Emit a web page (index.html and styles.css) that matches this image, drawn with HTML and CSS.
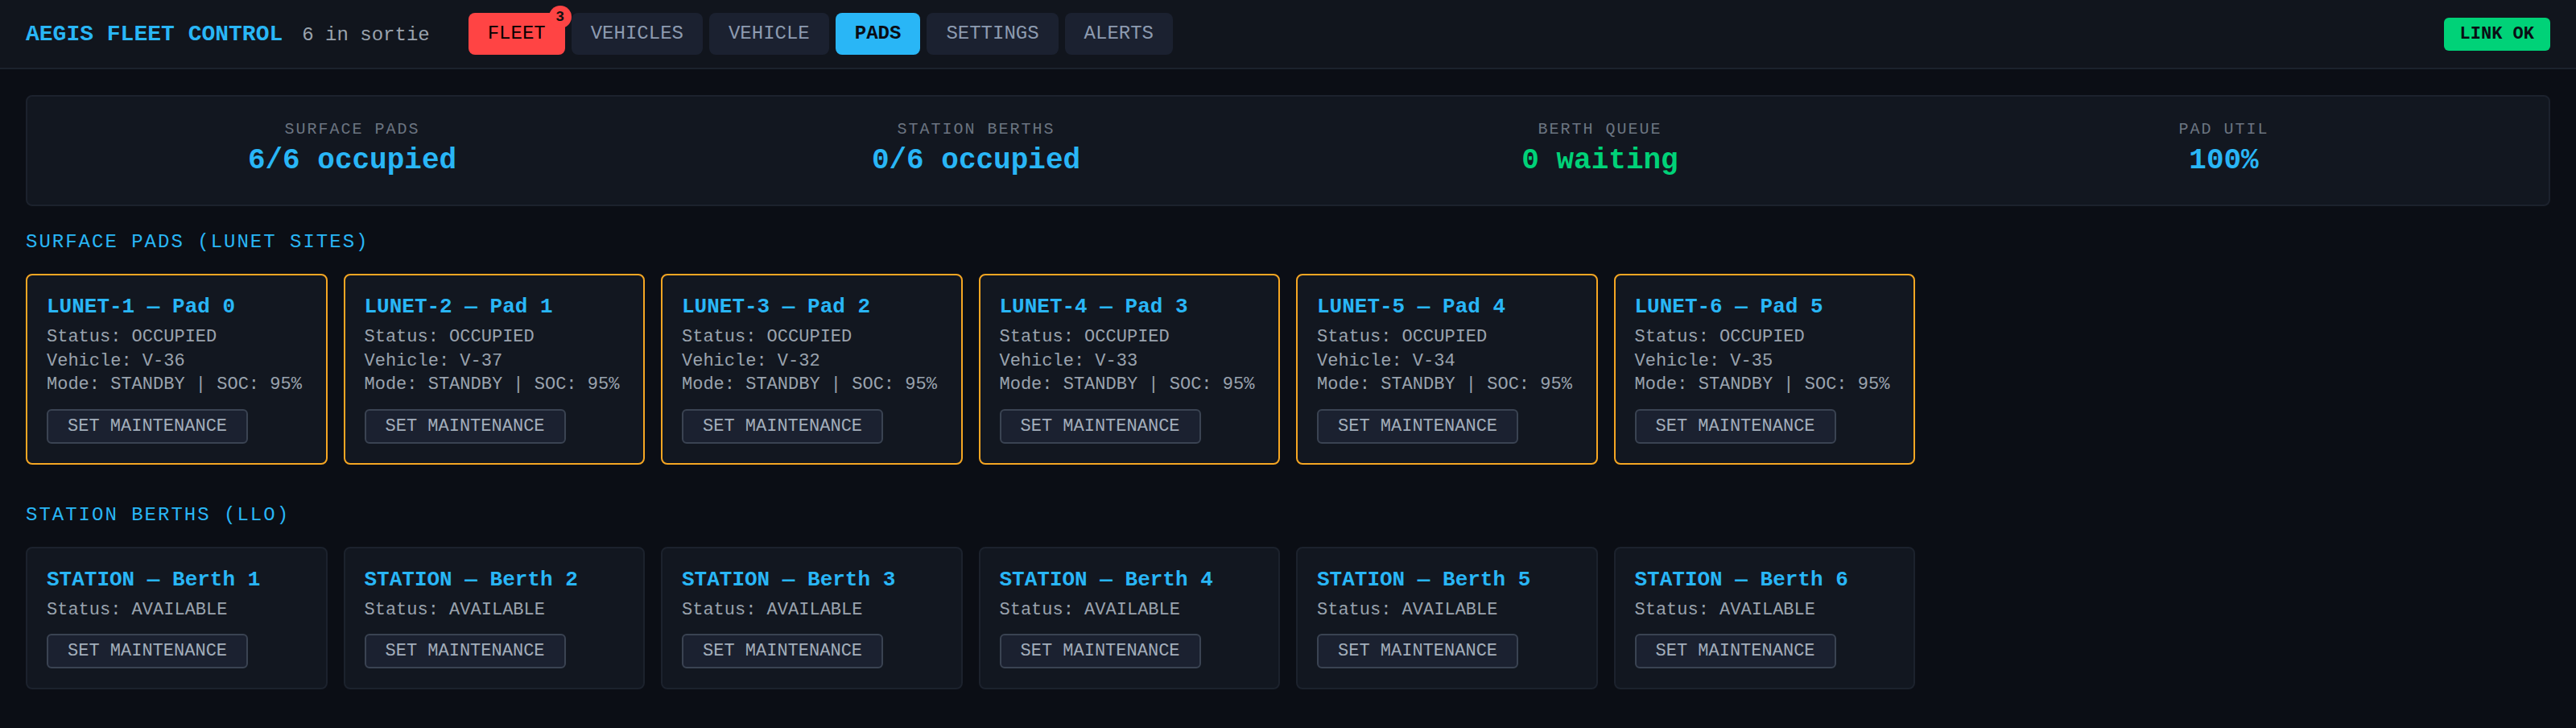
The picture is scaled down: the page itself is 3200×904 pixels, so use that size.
FILE: index.html
```html
<!DOCTYPE html>
<html lang="en">
<head>
  <meta charset="UTF-8" />
  <meta name="viewport" content="width=device-width, initial-scale=1" />
  <title>Aegis Fleet Control - Pads</title>
  <link rel="stylesheet" href="styles.css">
</head>
<body>
  <header class="topbar">
    <div class="brand">
      <h1>AEGIS FLEET CONTROL</h1>
      <span class="sortie">6 in sortie</span>
    </div>
    <nav class="tabs">
      <button class="tab tab-alert"><span class="tab-text">FLEET</span><span class="badge">3</span></button>
      <button class="tab">VEHICLES</button>
      <button class="tab">VEHICLE</button>
      <button class="tab active">PADS</button>
      <button class="tab">SETTINGS</button>
      <button class="tab">ALERTS</button>
    </nav>
    <span class="link-ok">LINK OK</span>
  </header>

  <main class="content">
    <div class="stats">
      <div class="stat">
        <div class="stat-label">SURFACE PADS</div>
        <div class="stat-value">6/6 occupied</div>
      </div>
      <div class="stat">
        <div class="stat-label">STATION BERTHS</div>
        <div class="stat-value">0/6 occupied</div>
      </div>
      <div class="stat">
        <div class="stat-label">BERTH QUEUE</div>
        <div class="stat-value ok">0 waiting</div>
      </div>
      <div class="stat">
        <div class="stat-label">PAD UTIL</div>
        <div class="stat-value">100%</div>
      </div>
    </div>

    <!-- surface pads -->
    <section class="section">
      <h2 class="section-title">SURFACE PADS (LUNET SITES)</h2>
      <div class="grid">
        <div class="card occupied">
          <h3>LUNET-1 — Pad 0</h3>
          <p>Status: OCCUPIED</p>
          <p>Vehicle: V-36</p>
          <p>Mode: STANDBY | SOC: 95%</p>
          <button class="maint-btn">SET MAINTENANCE</button>
        </div>
        <div class="card occupied">
          <h3>LUNET-2 — Pad 1</h3>
          <p>Status: OCCUPIED</p>
          <p>Vehicle: V-37</p>
          <p>Mode: STANDBY | SOC: 95%</p>
          <button class="maint-btn">SET MAINTENANCE</button>
        </div>
        <div class="card occupied">
          <h3>LUNET-3 — Pad 2</h3>
          <p>Status: OCCUPIED</p>
          <p>Vehicle: V-32</p>
          <p>Mode: STANDBY | SOC: 95%</p>
          <button class="maint-btn">SET MAINTENANCE</button>
        </div>
        <div class="card occupied">
          <h3>LUNET-4 — Pad 3</h3>
          <p>Status: OCCUPIED</p>
          <p>Vehicle: V-33</p>
          <p>Mode: STANDBY | SOC: 95%</p>
          <button class="maint-btn">SET MAINTENANCE</button>
        </div>
        <div class="card occupied">
          <h3>LUNET-5 — Pad 4</h3>
          <p>Status: OCCUPIED</p>
          <p>Vehicle: V-34</p>
          <p>Mode: STANDBY | SOC: 95%</p>
          <button class="maint-btn">SET MAINTENANCE</button>
        </div>
        <div class="card occupied">
          <h3>LUNET-6 — Pad 5</h3>
          <p>Status: OCCUPIED</p>
          <p>Vehicle: V-35</p>
          <p>Mode: STANDBY | SOC: 95%</p>
          <button class="maint-btn">SET MAINTENANCE</button>
        </div>
      </div>
    </section>

    <!-- station berths -->
    <section class="section berths">
      <h2 class="section-title">STATION BERTHS (LLO)</h2>
      <div class="grid">
        <div class="card">
          <h3>STATION — Berth 1</h3>
          <p>Status: AVAILABLE</p>
          <button class="maint-btn">SET MAINTENANCE</button>
        </div>
        <div class="card">
          <h3>STATION — Berth 2</h3>
          <p>Status: AVAILABLE</p>
          <button class="maint-btn">SET MAINTENANCE</button>
        </div>
        <div class="card">
          <h3>STATION — Berth 3</h3>
          <p>Status: AVAILABLE</p>
          <button class="maint-btn">SET MAINTENANCE</button>
        </div>
        <div class="card">
          <h3>STATION — Berth 4</h3>
          <p>Status: AVAILABLE</p>
          <button class="maint-btn">SET MAINTENANCE</button>
        </div>
        <div class="card">
          <h3>STATION — Berth 5</h3>
          <p>Status: AVAILABLE</p>
          <button class="maint-btn">SET MAINTENANCE</button>
        </div>
        <div class="card">
          <h3>STATION — Berth 6</h3>
          <p>Status: AVAILABLE</p>
          <button class="maint-btn">SET MAINTENANCE</button>
        </div>
      </div>
    </section>
  </main>
</body>
</html>
```

FILE: styles.css
```css
* {
  margin: 0; padding: 0; box-sizing: border-box;
  font-family: "Liberation Mono", "DejaVu Sans Mono", monospace;
}
body {
  background-color: #0b0e15;
  color: #9aa3ae;
  min-height: 100vh;
}

/* top bar */
.topbar {
  display: flex;
  align-items: center;
  padding: 16px 32px;
  background-color: #11151d;
  border-bottom: 2px solid #1c222d;
}
.brand {
  display: flex;
  align-items: baseline;
  gap: 24px;
}
.brand h1 {
  font-size: 28px;
  font-weight: bold;
  color: #29b6f6;
}
.sortie {
  font-size: 24px;
  color: #9aa3ad;
}
.tabs {
  display: flex;
  gap: 8px;
  margin-left: 48px;
}
.tab {
  position: relative;
  border: none;
  border-radius: 8px;
  padding: 12px 24px;
  font-size: 24px;
  line-height: 28px;
  background-color: #1b2130;
  color: #8d9bb0;
  cursor: pointer;
}
.tab.tab-alert {
  background-color: #ff4444;
}
.tab-alert .tab-text {
  color: #000000;
}
.tab.active {
  background-color: #29b6f6;
  color: #0a0d14;
  font-weight: bold;
}
.badge {
  position: absolute;
  top: -9px;
  right: -8px;
  width: 28px;
  height: 28px;
  border-radius: 50%;
  background-color: #ff4444;
  color: #111111;
  font-size: 18px;
  font-weight: bold;
  line-height: 28px;
  text-align: center;
}
.link-ok {
  margin-left: auto;
  padding: 8px 20px;
  border-radius: 6px;
  background-color: #00d278;
  color: #0a0d14;
  font-size: 22px;
  font-weight: bold;
}

/* content */
.content {
  padding: 32px;
}
.stats {
  display: grid;
  grid-template-columns: repeat(4, 1fr);
  gap: 32px;
  padding: 29px 32px 34px;
  background-color: #121720;
  border: 2px solid #1c222d;
  border-radius: 8px;
  text-align: center;
}
.stat-label {
  font-size: 20px;
  letter-spacing: 2px;
  color: #6b7480;
}
.stat-value {
  margin-top: 7px;
  font-size: 36px;
  font-weight: bold;
  color: #29b6f6;
}
.stat-value.ok {
  color: #00d278;
}

.section {
  margin-top: 31px;
}
.section.berths {
  margin-top: 49px;
}
.section-title {
  font-size: 24px;
  font-weight: normal;
  letter-spacing: 2px;
  color: #29b6f6;
  margin-bottom: 26px;
}
.grid {
  display: grid;
  grid-template-columns: repeat(auto-fill, minmax(360px, 1fr));
  gap: 20px;
}
.card {
  background-color: #121720;
  border: 2px solid #1c222d;
  border-radius: 8px;
  padding: 24px;
}
.card.occupied {
  border-color: #f5a623;
}
.card h3 {
  font-size: 26px;
  font-weight: bold;
  color: #29b6f6;
  margin-bottom: 8px;
}
.card p {
  font-size: 22px;
  line-height: 29.5px;
  color: #9aa3ae;
}
.maint-btn {
  margin-top: 15px;
  padding: 7px 24px;
  font-size: 22px;
  background-color: #1b2130;
  color: #a3aebb;
  border: 2px solid #3a4352;
  border-radius: 6px;
  cursor: pointer;
}
.maint-btn:hover {
  background-color: #232a3a;
}
```
